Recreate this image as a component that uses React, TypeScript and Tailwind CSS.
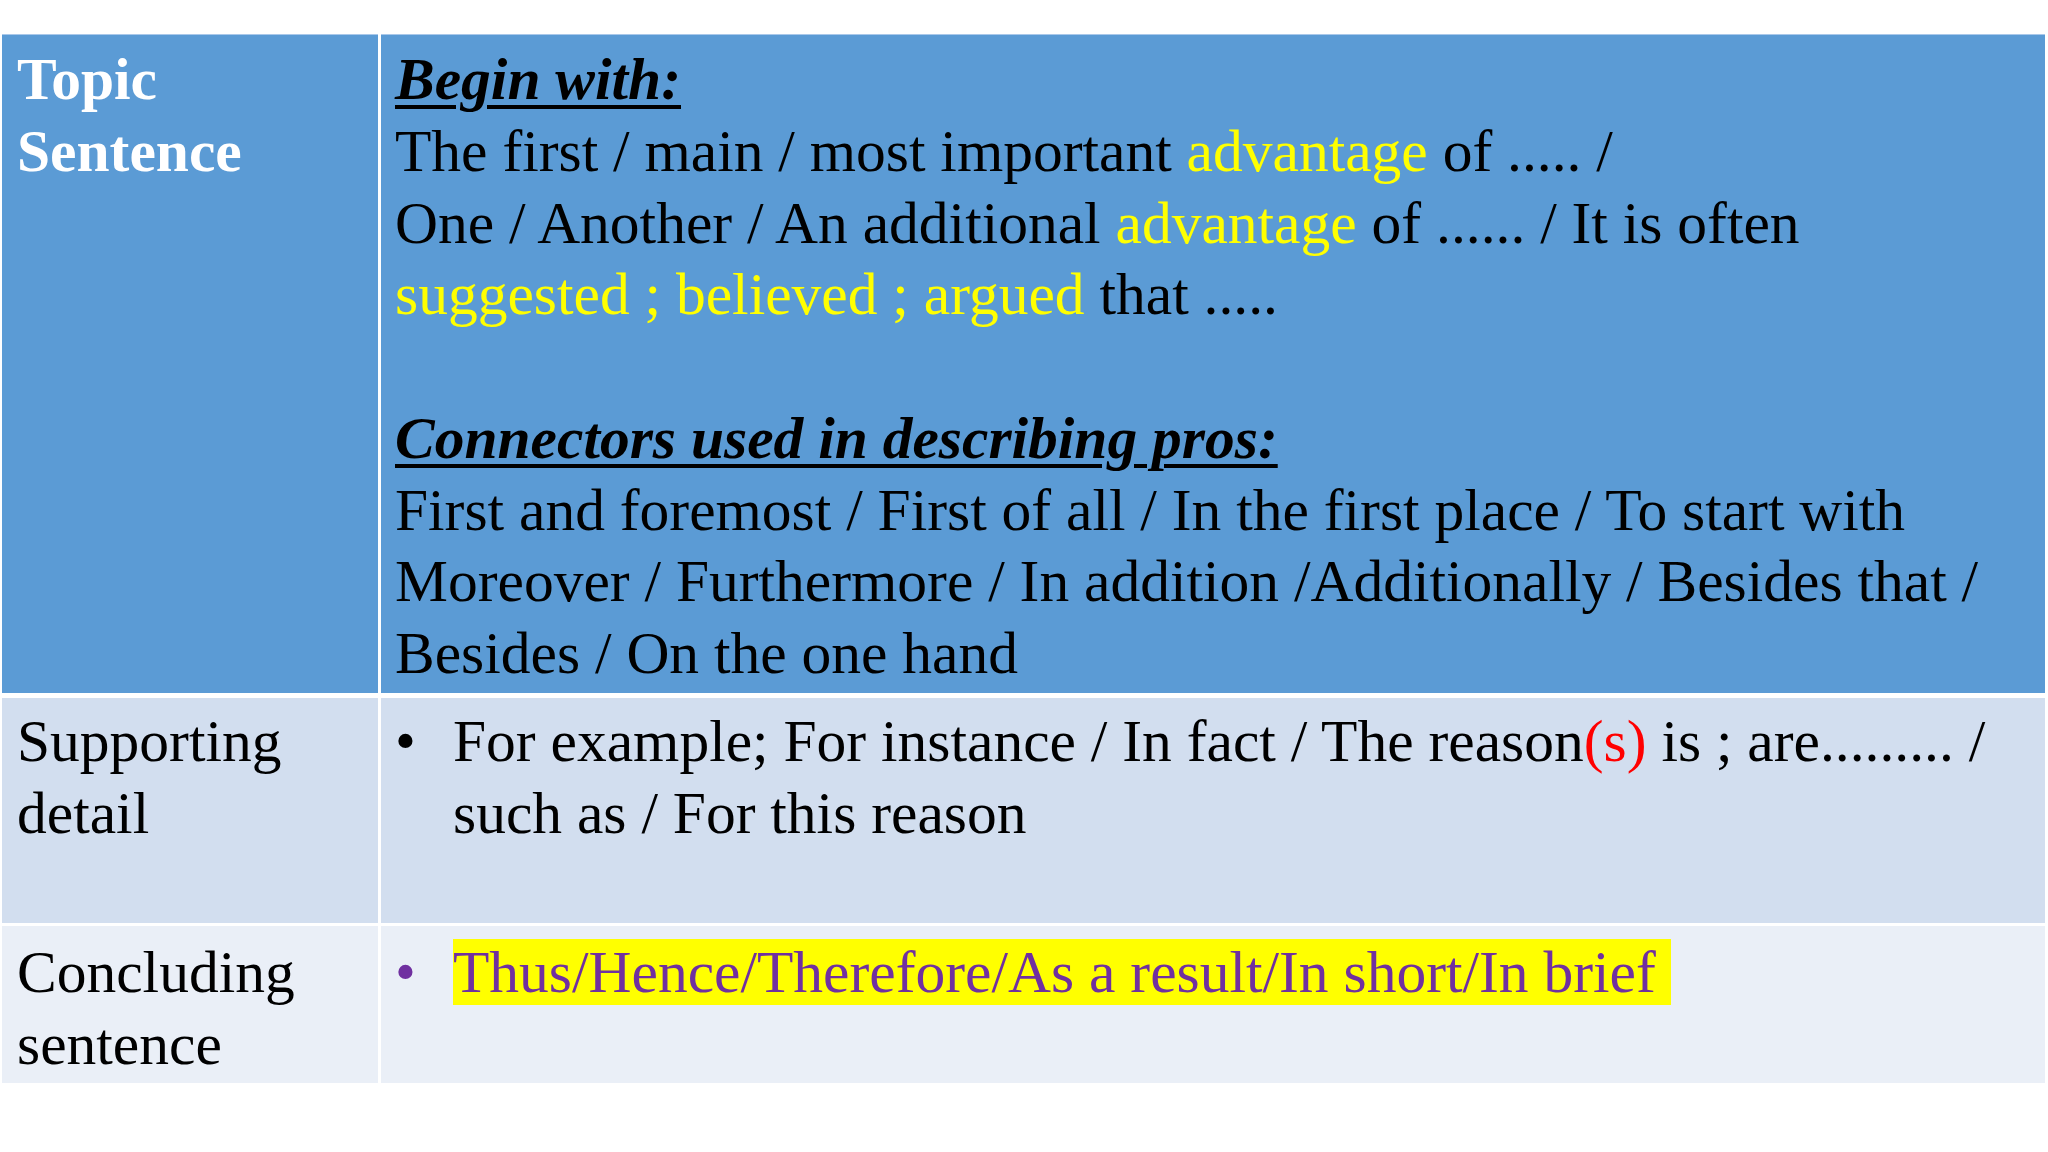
import React from "react";

const Y = ({ children }: { children: React.ReactNode }) => (
  <span className="text-[#FFFF00]">{children}</span>
);

const Heading = ({ children }: { children: React.ReactNode }) => (
  <div className="font-bold italic underline decoration-[4px] underline-offset-[6px]">{children}</div>
);

export default function App() {
  return (
    <div className="w-[2048px] h-[1152px] bg-white pt-[34px] font-['Liberation_Serif','Times_New_Roman',serif] text-[59.5px] leading-[71.75px] text-black">
      <div className="ml-[2px] w-[2043px] flex flex-col">
        {/* Topic sentence */}
        <div className="flex h-[659px] gap-x-[3px]">
          <div className="w-[376px] shrink-0 bg-[#5B9BD5] border-t border-[#a9c8ea] pl-[15px] pt-[9px] font-bold text-white">
            <div>Topic</div>
            <div>Sentence</div>
          </div>
          <div className="flex-1 bg-[#5B9BD5] border-t border-[#a9c8ea] pl-[14px] pt-[9px] whitespace-nowrap">
            <Heading>Begin with:</Heading>
            <div>
              The first / main / most important <Y>advantage</Y> of ..... /
            </div>
            <div>
              One / Another / An additional <Y>advantage</Y> of ...... / It is often
            </div>
            <div>
              <Y>suggested ; believed ; argued</Y> that .....
            </div>
            <div>&nbsp;</div>
            <Heading>Connectors used in describing pros:</Heading>
            <div>First and foremost / First of all / In the first place / To start with</div>
            <div>Moreover / Furthermore / In addition /Additionally / Besides that /</div>
            <div>Besides / On the one hand</div>
          </div>
        </div>

        {/* Supporting detail */}
        <div className="flex h-[225px] gap-x-[3px] mt-[5px]">
          <div className="w-[376px] shrink-0 bg-[#D2DEEF] pl-[15px] pt-[8px]">
            <div>Supporting</div>
            <div>detail</div>
          </div>
          <div className="flex-1 bg-[#D2DEEF] pl-[14px] pt-[8px] flex whitespace-nowrap">
            <div className="w-[58px] shrink-0">•</div>
            <div>
              <div>
                For example; For instance / In fact / The reason<span className="text-[#FF0000]">(s)</span> is ; are......... /
              </div>
              <div>such as / For this reason</div>
            </div>
          </div>
        </div>

        {/* Concluding sentence */}
        <div className="flex h-[157px] gap-x-[3px] mt-[3px]">
          <div className="w-[376px] shrink-0 bg-[#EAEFF7] pl-[15px] pt-[11px]">
            <div>Concluding</div>
            <div>sentence</div>
          </div>
          <div className="flex-1 bg-[#EAEFF7] pl-[14px] pt-[11px] flex whitespace-nowrap">
            <div className="w-[58px] shrink-0 text-[#7030A0]">•</div>
            <div>
              <span className="bg-[#FFFF00] text-[#7030A0]">
                Thus/Hence/Therefore/As a result/In short/In brief{"\u00a0"}
              </span>
            </div>
          </div>
        </div>
      </div>
    </div>
  );
}
